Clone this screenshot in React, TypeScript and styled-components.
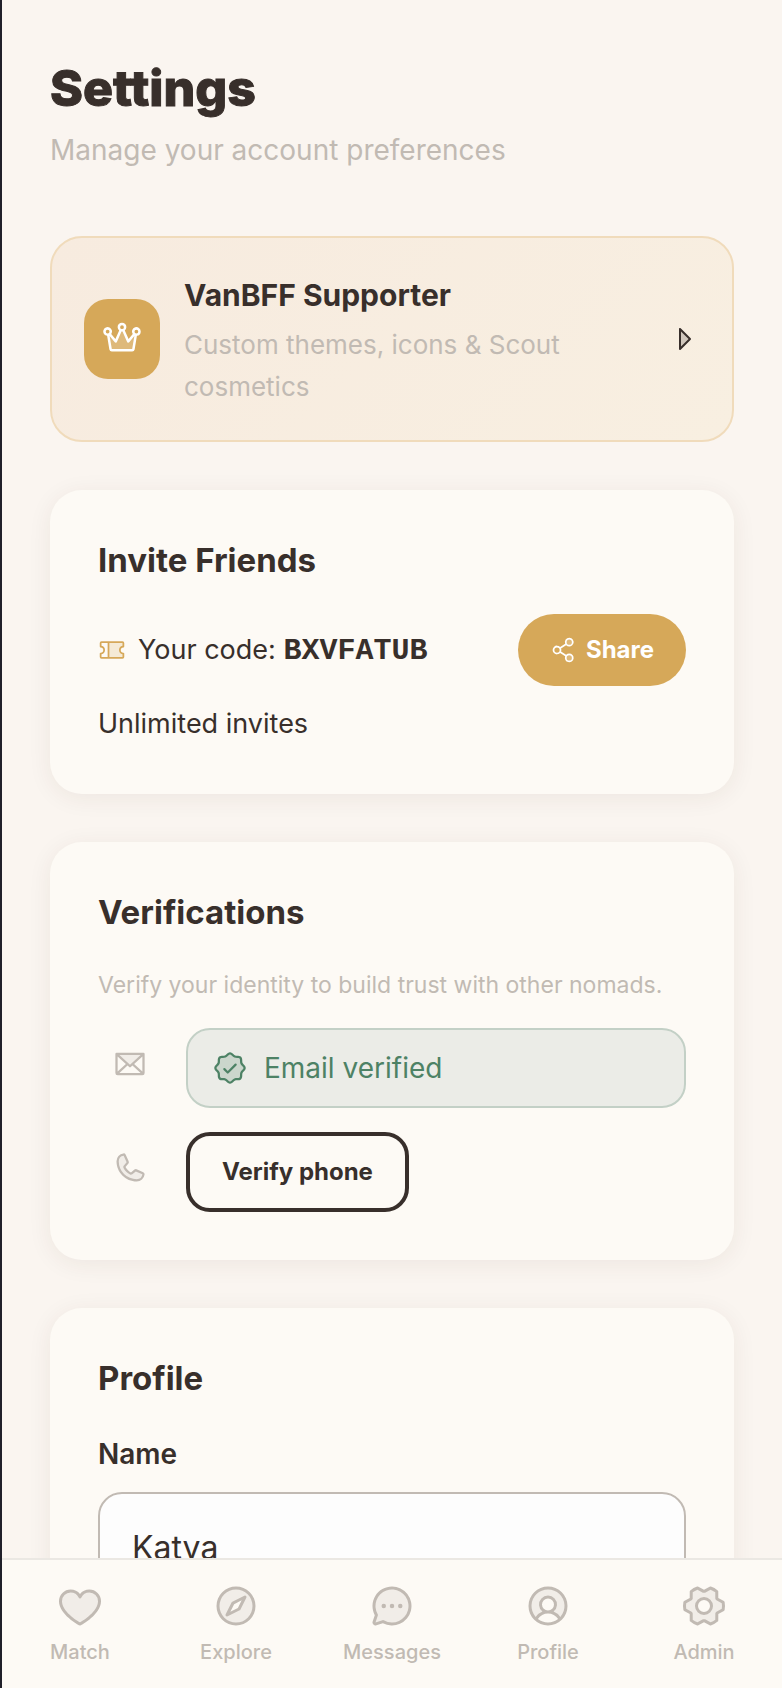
import React from "react";
import styled, { createGlobalStyle } from "styled-components";
import {
  PiCaretRightDuotone,
  PiChatCircleDotsDuotone,
  PiCompassDuotone,
  PiCrownDuotone,
  PiEnvelopeDuotone,
  PiGearSixDuotone,
  PiHeartDuotone,
  PiPhoneDuotone,
  PiSealCheckDuotone,
  PiShareNetworkDuotone,
  PiTicketDuotone,
  PiUserCircleDuotone,
} from "react-icons/pi";

const color = {
  ink: "#382f2b",
  muted: "#c1bab3",
  gold: "#d6a859",
  green: "#4d8265",
  page: "#faf5f0",
  card: "#fdfaf5",
};

const displayFont = `Inter, "Open Sans", sans-serif`;
const bodyFont = `Inter, "Open Sans", sans-serif`;

const GlobalStyle = createGlobalStyle`
  *, *::before, *::after { box-sizing: border-box; }
  body { margin: 0; background: ${color.page}; color: ${color.ink}; font-family: ${bodyFont}; }
  h1, h2, h3, p { margin: 0; }
  svg { display: block; flex: none; }
`;

const Shell = styled.div`
  display: flex;
  flex-direction: column;
  height: 100vh;
  border-left: 2px solid #20202a;
`;

const Content = styled.main`
  flex: 1;
  min-height: 0;
  overflow-y: auto;
  scrollbar-width: none;
  padding: 56px 48px 48px;
`;

const PageHeader = styled.header`
  display: flex;
  flex-direction: column;
  gap: 8px;
  margin-bottom: 64px;
`;

const PageTitle = styled.h1`
  font: 800 50px/64px ${displayFont};
  -webkit-text-stroke: 1px ${color.ink};
`;

const PageSubtitle = styled.p`
  font-size: 28px;
  line-height: 44px;
  color: ${color.muted};
`;

const Stack = styled.div`
  display: flex;
  flex-direction: column;
  gap: 48px;
`;

const SupporterCard = styled.a`
  display: flex;
  align-items: center;
  gap: 24px;
  padding: 32px;
  border: 2px solid #f0dbbb;
  border-radius: 32px;
  background: linear-gradient(135deg, #f7ebdf, #f8efe1);
  color: inherit;
  text-decoration: none;
`;

const CrownTile = styled.span`
  display: flex;
  align-items: center;
  justify-content: center;
  flex: none;
  width: 76px;
  height: 80px;
  border-radius: 24px;
  background: ${color.gold};
  color: #fff;
`;

const SupporterText = styled.div`
  flex: 1;
  display: flex;
  flex-direction: column;
  gap: 4px;
`;

const SupporterTitle = styled.h2`
  font: 700 30px/50px ${displayFont};
`;

const SupporterNote = styled.p`
  max-width: 420px;
  font-size: 26px;
  line-height: 42px;
  color: ${color.muted};
`;

const Card = styled.section`
  display: flex;
  flex-direction: column;
  padding: 48px;
  border-radius: 32px;
  background: ${color.card};
  box-shadow: 0 4px 24px rgba(70, 40, 30, 0.07);
`;

const CardTitle = styled.h2`
  margin-bottom: 32px;
  font: 700 33px/44px ${displayFont};
`;

const CodeRow = styled.div`
  display: flex;
  align-items: center;
  justify-content: space-between;
  margin-bottom: 16px;
`;

const InviteCode = styled.p`
  display: flex;
  align-items: center;
  gap: 12px;
  font-size: 27px;
  line-height: 44px;

  svg { color: ${color.gold}; }
  strong { font: 700 30px/44px "Liberation Mono", monospace; }
`;

const ShareButton = styled.button`
  display: flex;
  align-items: center;
  gap: 8px;
  height: 72px;
  padding: 0 32px;
  border: 0;
  border-radius: 36px;
  background: ${color.gold};
  color: #fff;
  font: 700 24px/36px ${displayFont};
`;

const BodyText = styled.p`
  font-size: 27px;
  line-height: 44px;
`;

const CardNote = styled.p`
  margin-bottom: 24px;
  font-size: 23px;
  line-height: 38px;
  color: ${color.muted};
`;

const VerificationList = styled.ul`
  display: flex;
  flex-direction: column;
  gap: 24px;
  margin: 0;
  padding: 0;
  list-style: none;
`;

const VerificationRow = styled.li`
  display: flex;
  align-items: flex-start;
  gap: 24px;
`;

const MethodIcon = styled.span`
  display: flex;
  align-items: center;
  justify-content: center;
  flex: none;
  width: 64px;
  height: 72px;
  color: ${color.muted};
`;

const VerifiedBadge = styled.div`
  flex: 1;
  display: flex;
  align-items: center;
  gap: 16px;
  height: 80px;
  padding: 0 24px;
  border: 2px solid #c3d0c6;
  border-radius: 24px;
  background: #ebece7;
  color: ${color.green};
  font-size: 28px;
  line-height: 44px;
`;

const OutlineButton = styled.button`
  height: 80px;
  padding: 0 32px;
  border: 4px solid ${color.ink};
  border-radius: 24px;
  background: transparent;
  color: ${color.ink};
  font: 700 24px/36px ${displayFont};
`;

const FieldLabel = styled.label`
  margin-bottom: 16px;
  font-size: 28px;
  font-weight: 600;
  line-height: 44px;
`;

const TextInput = styled.input`
  width: 100%;
  height: 110px;
  padding: 0 32px;
  border: 2px solid ${color.muted};
  border-radius: 24px;
  background: #fdfdfd;
  color: ${color.ink};
  font: 400 32px/48px ${bodyFont};
`;

const TabBar = styled.nav`
  flex: none;
  display: grid;
  grid-template-columns: repeat(5, 1fr);
  padding: 22px 0;
  border-top: 2px solid #ebe8e3;
  background: ${color.card};
`;

const TabLink = styled.a`
  display: flex;
  flex-direction: column;
  align-items: center;
  gap: 8px;
  color: ${color.muted};
  font-size: 20px;
  font-weight: 500;
  line-height: 28px;
  text-decoration: none;
`;

const tabs = [
  { label: "Match", Icon: PiHeartDuotone },
  { label: "Explore", Icon: PiCompassDuotone },
  { label: "Messages", Icon: PiChatCircleDotsDuotone },
  { label: "Profile", Icon: PiUserCircleDuotone },
  { label: "Admin", Icon: PiGearSixDuotone },
];

export default function App() {
  return (
    <>
      <GlobalStyle />
      <Shell>
        <Content>
          <PageHeader>
            <PageTitle>Settings</PageTitle>
            <PageSubtitle>Manage your account preferences</PageSubtitle>
          </PageHeader>
          <Stack>
            <SupporterCard href="#supporter">
              <CrownTile>
                <PiCrownDuotone size={40} />
              </CrownTile>
              <SupporterText>
                <SupporterTitle>VanBFF Supporter</SupporterTitle>
                <SupporterNote>Custom themes, icons &amp; Scout cosmetics</SupporterNote>
              </SupporterText>
              <PiCaretRightDuotone size={32} />
            </SupporterCard>

            <Card>
              <CardTitle>Invite Friends</CardTitle>
              <CodeRow>
                <InviteCode>
                  <PiTicketDuotone size={28} />
                  <span>
                    Your code: <strong>BXVFATUB</strong>
                  </span>
                </InviteCode>
                <ShareButton type="button">
                  <PiShareNetworkDuotone size={28} />
                  Share
                </ShareButton>
              </CodeRow>
              <BodyText>Unlimited invites</BodyText>
            </Card>

            <Card>
              <CardTitle>Verifications</CardTitle>
              <CardNote>Verify your identity to build trust with other nomads.</CardNote>
              <VerificationList>
                <VerificationRow>
                  <MethodIcon>
                    <PiEnvelopeDuotone size={36} />
                  </MethodIcon>
                  <VerifiedBadge>
                    <PiSealCheckDuotone size={36} />
                    Email verified
                  </VerifiedBadge>
                </VerificationRow>
                <VerificationRow>
                  <MethodIcon>
                    <PiPhoneDuotone size={36} />
                  </MethodIcon>
                  <OutlineButton type="button">Verify phone</OutlineButton>
                </VerificationRow>
              </VerificationList>
            </Card>

            <Card>
              <CardTitle>Profile</CardTitle>
              <FieldLabel htmlFor="name">Name</FieldLabel>
              <TextInput id="name" type="text" defaultValue="Katya" />
            </Card>
          </Stack>
        </Content>
        <TabBar aria-label="Main">
          {tabs.map(({ label, Icon }) => (
            <TabLink key={label} href={`#${label.toLowerCase()}`}>
              <Icon size={48} />
              {label}
            </TabLink>
          ))}
        </TabBar>
      </Shell>
    </>
  );
}
